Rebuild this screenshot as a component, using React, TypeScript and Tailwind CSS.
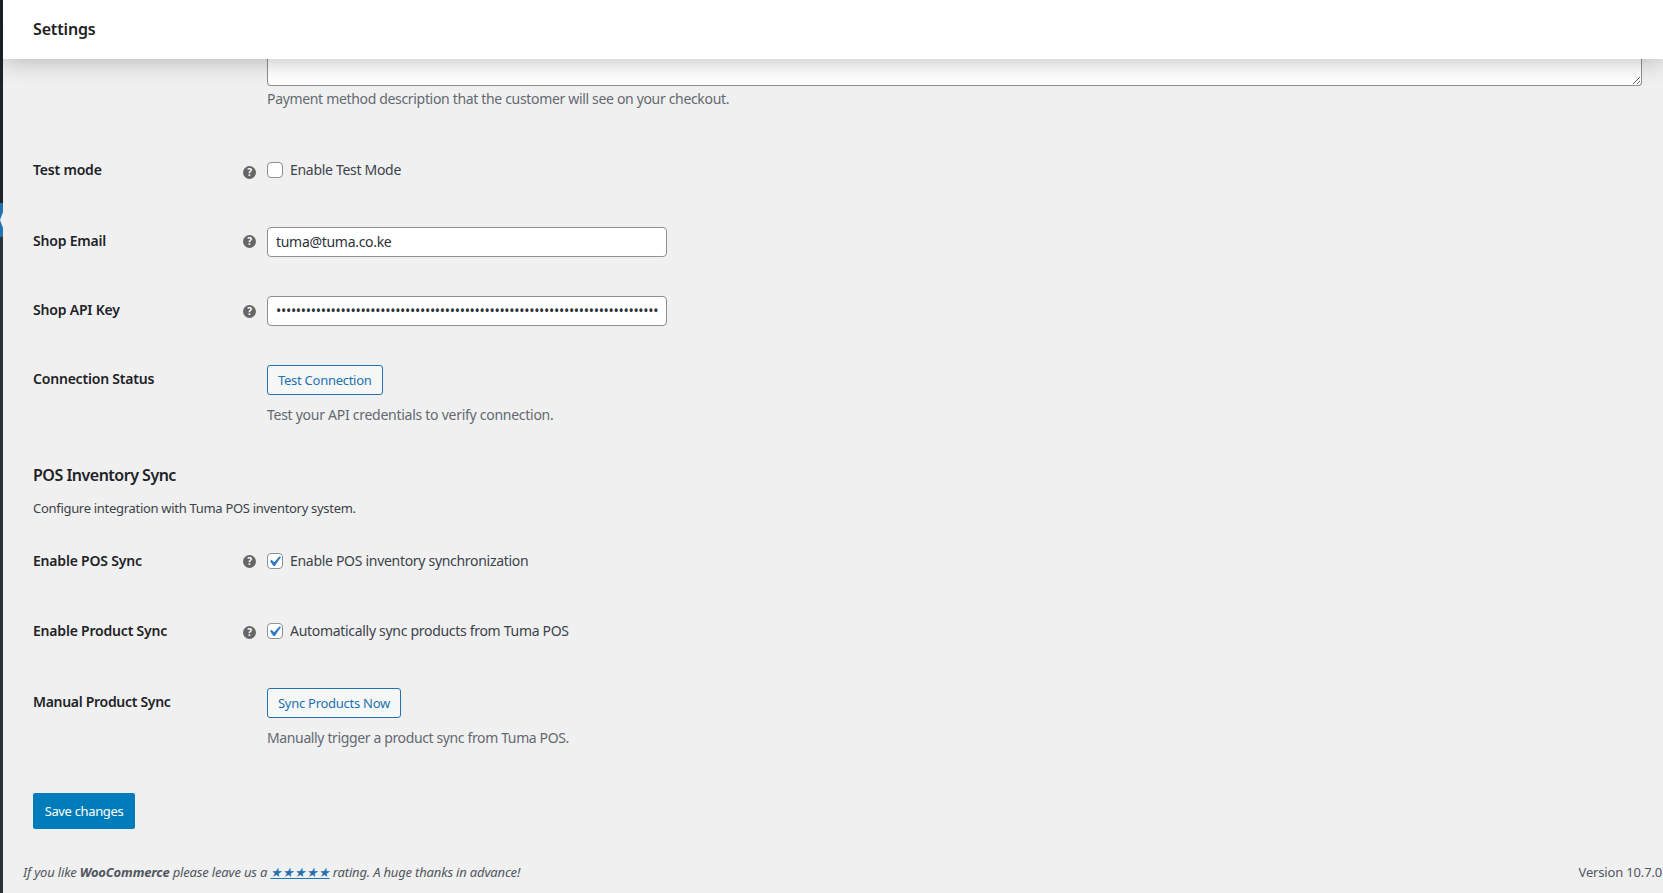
import { ReactNode } from "react";

function HelpTip() {
  return (
    <span className="flex h-[13px] w-[13px] items-center justify-center rounded-full bg-[#666666] text-[10px] font-bold leading-none text-white">
      ?
    </span>
  );
}

function Check({ checked, label }: { checked?: boolean; label: string }) {
  return (
    <label className="flex h-5 items-center gap-[7px] text-[14px] text-[#3c434a]">
      <span className="relative h-4 w-4">
        <input
          type="checkbox"
          readOnly
          checked={!!checked}
          className="block h-4 w-4 appearance-none rounded-[4px] border border-[#8c8f94] bg-white"
        />
        {checked && (
          <svg viewBox="0 0 20 20" className="absolute left-[-3px] top-[-2px] h-[21px] w-[21px] fill-[#2b7cc4]">
            <path d="M14.83 4.89l1.34.94-5.81 8.38H9.02L5.78 9.67l1.34-1.25 2.57 2.4z" />
          </svg>
        )}
      </span>
      <span className="pb-[2px]">{label}</span>
    </label>
  );
}

function Row({
  label,
  help,
  className,
  labelClass,
  helpClass,
  children,
}: {
  label: string;
  help?: boolean;
  className: string;
  labelClass?: string;
  helpClass?: string;
  children: ReactNode;
}) {
  return (
    <div className={`flex items-start pl-[30px] ${className}`}>
      <div className={`w-[210px] text-[14px] font-semibold leading-5 tracking-[-0.2px] text-[#1d2327] ${labelClass ?? ""}`}>
        {label}
      </div>
      <div className={`flex h-5 w-[24px] items-center ${labelClass ?? ""} ${helpClass ?? ""}`}>{help && <HelpTip />}</div>
      <div className="min-w-0 flex-1">{children}</div>
    </div>
  );
}

function OutlineButton({ children }: { children: ReactNode }) {
  return (
    <button className="h-[30px] rounded-[3px] border border-[#2271b1] bg-[#f6f7f7] px-[10px] pt-[2px] text-[13px] tracking-[-0.27px] text-[#2271b1]">
      {children}
    </button>
  );
}

function TextInput({ type, value }: { type: string; value: string }) {
  return (
    <input
      type={type}
      readOnly
      value={value}
      className="block h-[30px] w-[400px] rounded-[4px] border border-[#8c8f94] bg-white px-2 pb-[2px] text-[14px] text-[#2c3338]"
    />
  );
}

export default function App() {
  return (
    <div className="flex h-[893px] overflow-hidden bg-[#f0f0f1] font-['Noto_Sans',sans-serif] tracking-[-0.3px]">
      {/* admin menu, almost entirely collapsed out of view */}
      <aside className="flex w-[3px] shrink-0 flex-col">
        <div className="h-[203px] bg-[#1d2327]" />
        <div className="relative h-[34px] bg-[#2271b1]">
          <svg viewBox="0 0 3 16" className="absolute left-0 top-[9px] h-4 w-[3px] fill-[#f0f0f1]">
            <path d="M3 0L0 8L3 16z" />
          </svg>
        </div>
        <div className="flex-1 bg-[#2c3338]" />
      </aside>

      <div className="flex min-w-0 flex-1 flex-col">
        <header className="relative z-10 flex h-[59px] shrink-0 items-center bg-white pb-[2px] pl-[30px] shadow-[0_2px_24px_rgba(0,0,0,0.25)]">
          <h1 className="text-[16px] font-semibold tracking-[-0.15px] text-[#1e1e1e]">Settings</h1>
        </header>

        <main className="flex-1">
          <div className="pl-[264px] pr-[21px]">
            <textarea
              readOnly
              className="block h-[27px] w-full resize-y rounded-b-[4px] border border-t-0 border-[#8c8f94] bg-white"
            />
            <p className="mt-[3px] text-[14px] leading-5 tracking-[-0.33px] text-[#646970]">
              Payment method description that the customer will see on your checkout.
            </p>
          </div>

          <Row label="Test mode" help helpClass="translate-y-[2px]" className="mt-[51px]">
            <Check label="Enable Test Mode" />
          </Row>

          <Row label="Shop Email" help labelClass="mt-1" className="mt-[47px]">
            <TextInput type="text" value="tuma@tuma.co.ke" />
          </Row>

          <Row label="Shop API Key" help labelClass="mt-1" helpClass="translate-y-px" className="mt-[39px]">
            <TextInput
              type="password"
              value="•••••••••••••••••••••••••••••••••••••••••••••••••••••••••••••••••••••••••••••"
            />
          </Row>

          <Row label="Connection Status" labelClass="mt-1" className="mt-[39px]">
            <OutlineButton>Test Connection</OutlineButton>
            <p className="mt-[10px] text-[14px] leading-5 tracking-[-0.27px] text-[#646970]">
              Test your API credentials to verify connection.
            </p>
          </Row>

          <div className="pl-[30px]">
            <h2 className="mt-[38px] text-[16px] font-semibold leading-6 tracking-[-0.5px] text-[#1d2327]">POS Inventory Sync</h2>
            <p className="mt-[11px] text-[13px] leading-5 text-[#3c434a]">Configure integration with Tuma POS inventory system.</p>
          </div>

          <Row label="Enable POS Sync" help className="mt-[33px]">
            <Check checked label="Enable POS inventory synchronization" />
          </Row>

          <Row label="Enable Product Sync" help helpClass="translate-y-px" className="mt-[50px]">
            <Check checked label="Automatically sync products from Tuma POS" />
          </Row>

          <Row label="Manual Product Sync" labelClass="mt-1 tracking-[-0.3px]" className="mt-[47px]">
            <OutlineButton>Sync Products Now</OutlineButton>
            <p className="mt-[10px] text-[14px] leading-5 tracking-[-0.37px] text-[#646970]">
              Manually trigger a product sync from Tuma POS.
            </p>
          </Row>

          <div className="pl-[30px]">
            <button className="mt-[45px] h-9 w-[102px] rounded-[2px] bg-[#007cba] pt-[2px] text-[13px] tracking-[-0.35px] text-white">
              Save changes
            </button>
          </div>

          <footer className="mt-[33px] flex h-5 items-center justify-between pl-5 pr-px text-[13px] leading-5 tracking-[-0.17px] text-[#50575e]">
            <p className="italic">
              If you like <strong className="font-bold">WooCommerce</strong> please leave us a{" "}
              <a href="#" className="text-[#2271b1] underline">★★★★★</a> rating. A huge thanks in advance!
            </p>
            <p>Version 10.7.0</p>
          </footer>
        </main>
      </div>
    </div>
  );
}
